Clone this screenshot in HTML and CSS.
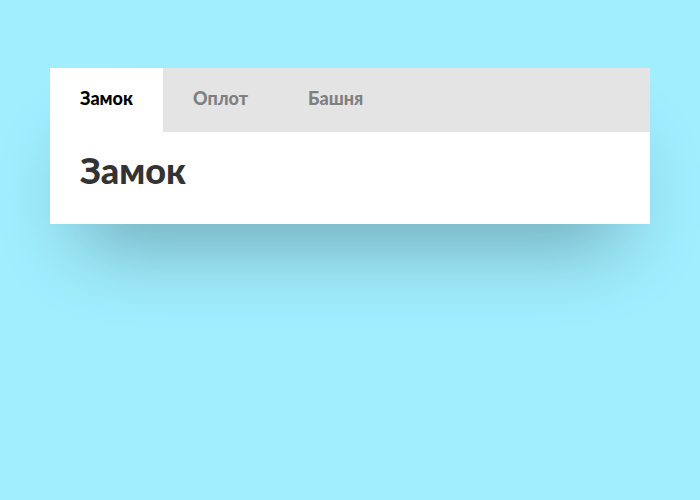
FILE: index.html
```html
<!DOCTYPE html>
<html lang="ru">
<head>
<meta charset="utf-8">
<meta name="viewport" content="width=device-width, initial-scale=1">
<title>Замок</title>
<link rel="stylesheet" href="styles.css">
</head>
<body>
<main class="card">
  <div class="tabs" role="tablist">
    <button class="tab tab-active" type="button" role="tab" id="tab-castle" aria-selected="true" aria-controls="panel-castle">Замок</button>
    <button class="tab" type="button" role="tab" aria-selected="false">Оплот</button>
    <button class="tab" type="button" role="tab" aria-selected="false">Башня</button>
  </div>
  <section class="panel" role="tabpanel" id="panel-castle" aria-labelledby="tab-castle">
    <h1 class="title">Замок</h1>
  </section>
</main>
</body>
</html>
```
FILE: styles.css
```css
* {
  box-sizing: border-box;
}

body {
  min-height: 100vh;
  margin: 0;
  padding: 68px 50px;
  background: #a0eeff;
  font-family: Lato, "Open Sans", sans-serif;
}

.card {
  background: #fff;
  box-shadow: 0 50px 80px -30px rgba(0, 0, 0, 0.3);
}

.tabs {
  display: flex;
  background: #e4e4e4;
}

.tab {
  padding: 18px 30px 22px;
  border: 0;
  background: transparent;
  color: #808080;
  font-family: inherit;
  font-size: 18px;
  font-weight: 900;
  line-height: 24px;
}

.tab-active {
  background: #fff;
  color: #000;
}

.panel {
  padding: 18px 30px 34px;
}

.title {
  margin: 0;
  color: #333;
  font-size: 36px;
  font-weight: 900;
  line-height: 40px;
}
```
